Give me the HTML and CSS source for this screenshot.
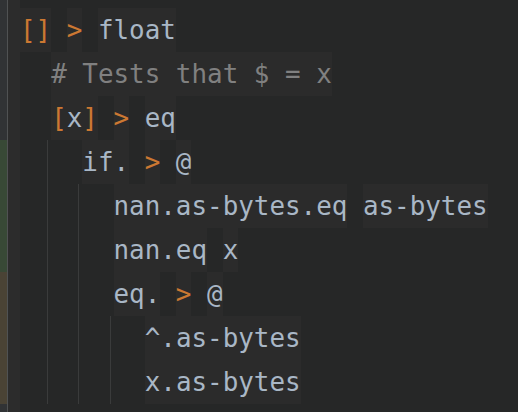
FILE: index.html
```html
<!DOCTYPE html>
<html>
<head>
<meta charset="utf-8">
<link rel="stylesheet" href="styles.css">
</head>
<body>
<div class="ide">
  <div class="vcs">
    <div class="vcs-plain"></div>
    <div class="vcs-added"></div>
    <div class="vcs-modified"></div>
    <div class="vcs-rest"></div>
  </div>
  <div class="sep"></div>
  <div class="gutter"></div>
  <div class="editor">
    <div class="line"><span class="tok kw">[]</span><span class="tok kw">&gt;</span><span class="tok">float</span></div>
    <div class="block">
      <div class="line"><span class="tok comment"># Tests that $ = x</span></div>
      <div class="line"><span class="tok"><span class="kw">[</span>x<span class="kw">]</span></span><span class="tok kw">&gt;</span><span class="tok">eq</span></div>
      <div class="nest">
        <div class="line"><span class="tok">if.</span><span class="tok kw">&gt;</span><span class="tok">@</span></div>
        <div class="nest">
          <div class="line"><span class="tok">nan.as-bytes.eq</span><span class="tok"><span class="attr">as-bytes</span></span></div>
          <div class="line"><span class="tok">nan.eq</span><span class="tok">x</span></div>
          <div class="line"><span class="tok">eq.</span><span class="tok kw">&gt;</span><span class="tok">@</span></div>
          <div class="nest">
            <div class="line"><span class="tok">^.<span class="attr">as-bytes</span></span></div>
            <div class="line"><span class="tok">x.<span class="attr">as-bytes</span></span></div>
          </div>
        </div>
      </div>
    </div>
  </div>
</div>
</body>
</html>
```
FILE: styles.css
```css
html, body {
  margin: 0;
  padding: 0;
  background: #262727;
}

.ide {
  display: flex;
  width: 518px;
  height: 412px;
  overflow: hidden;
}

.vcs {
  width: 7px;
  display: flex;
  flex-direction: column;
  background: #313335;
}

.vcs-plain {
  height: 140px;
}

.vcs-added {
  height: 132px;
  background: #384936;
}

.vcs-modified {
  height: 132px;
  background: #4a4335;
}

.vcs-rest {
  flex: 1;
}

.sep {
  width: 1px;
  background: #505253;
}

.gutter {
  width: 12px;
  background: #2c2c2c;
}

.editor {
  flex: 1;
  padding-top: 8px;
  font-family: "DejaVu Sans Mono", monospace;
  font-size: 25.9px;
  line-height: 44px;
  color: #a9b7c6;
}

.line {
  display: flex;
  gap: 1ch;
  height: 44px;
}

.tok {
  background: #2b2b2b;
  white-space: pre;
}

.attr {
  font-style: normal;
}

.kw {
  color: #cc7832;
}

.comment {
  color: #808080;
}

.block {
  margin-left: 2ch;
}

.nest {
  margin-left: -4px;
  border-left: 1px solid #3a3b3b;
  padding-left: calc(2ch + 3px);
}
```
